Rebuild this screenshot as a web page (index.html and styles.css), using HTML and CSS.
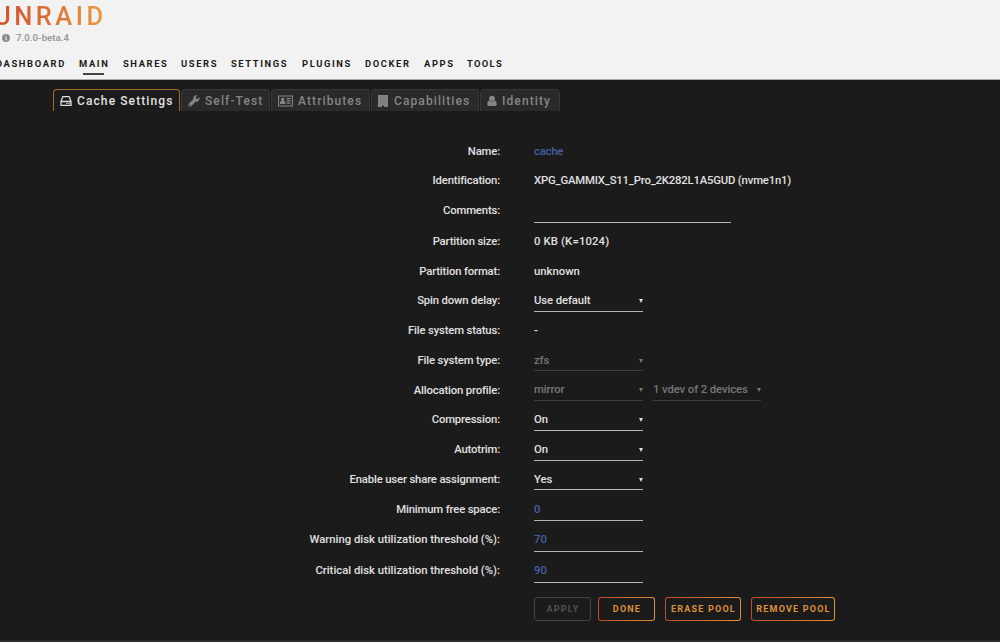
FILE: index.html
```
<!DOCTYPE html>
<html lang="en">

<head>
    <meta charset="utf-8">
    <title>Unraid - Cache Settings</title>
    <link rel="stylesheet" href="styles.css">
</head>

<body>
    <header class="header">
        <div class="logo">UNRAID</div>
        <div class="version">
            <svg class="info" viewBox="0 0 16 16"><circle cx="8" cy="8" r="8"/><path d="M7 3h2.5v2H7zM6 6.5h3.5V11h1v1.5H6V11h1V8H6z" fill="#d0d0d0"/></svg>
            <span>7.0.0-beta.4</span>
        </div>
    </header>

    <nav class="menu">
        <a class="dashboard">DASHBOARD</a>
        <a class="main active">MAIN</a>
        <a class="shares">SHARES</a>
        <a class="users">USERS</a>
        <a class="settings">SETTINGS</a>
        <a class="plugins">PLUGINS</a>
        <a class="docker">DOCKER</a>
        <a class="apps">APPS</a>
        <a class="tools">TOOLS</a>
    </nav>

    <div class="tabs">
        <div class="tab cache selected">
            <svg viewBox="0 0 12 12"><path d="M1 6.5 2.8 1.6h6.4L11 6.500v3.900H1zM1 6.500h10" fill="none" stroke="currentColor" stroke-width="1.3" stroke-linejoin="round"/><path d="M6.200 7.800h1.300v1.300H6.200zM8.400 7.800h1.300v1.300H8.400z"/></svg>
            <span>Cache Settings</span>
        </div>
        <div class="tab selftest">
            <svg viewBox="0 0 12 12"><path d="M11.3 2.2 9.5 4 8 3.6 7.7 2.3 9.6.5C7.300-.300 5 1.600 5.300 4.200L.7 8.800c-1.300 1.500.900 3.700 2.400 2.400l4.700-4.600c2.500.300 4.500-2 3.500-4.400zM2 9.300a.6.6 0 1 1 0 1.200.6.6 0 0 1 0-1.200z"/></svg>
            <span>Self-Test</span>
        </div>
        <div class="tab attributes">
            <svg class="wide" viewBox="0 0 15 12"><path d="M.6 1h13.800v10H.6z" fill="none" stroke="currentColor" stroke-width="1.1"/><circle cx="4.700" cy="4.200" r="1.700"/><path d="M2 9V7l1.500-1.400h2.400L7.400 7v2zM8.500 3h4v1.200h-4zM8.500 5.200h4v1.200h-4zM8.500 7.600h4v1.200h-4z"/></svg>
            <span>Attributes</span>
        </div>
        <div class="tab capabilities">
            <svg class="building" viewBox="0 0 10 12"><path fill-rule="evenodd" d="M0 0h10v12H6.200v-1.400H3.800V12H0zM2 2v.6h.6V2zm2.700 0v.6h.6V2zm2.700 0v.6H8V2zM2 4.500v.6h.6v-.6zm2.700 0v.6h.6v-.6zm2.700 0v.6H8v-.6zM2 7v.6h.6V7zm2.700 0v.6h.6V7zm2.700 0v.6H8V7z"/></svg>
            <span>Capabilities</span>
        </div>
        <div class="tab identity">
            <svg class="user" viewBox="0 0 10 12"><circle cx="5" cy="3.600" r="2.900"/><path d="M2.200 5.500C.8 5.900.300 7.500.300 9.200c0 1 .7 1.800 1.700 1.800h6c1 0 1.700-.8 1.700-1.800 0-1.700-.5-3.300-1.900-3.700C6.500 7.300 3.500 7.300 2.200 5.500z"/></svg>
            <span>Identity</span>
        </div>
    </div>

    <form class="form">
        <div class="row"><label>Name:</label><span class="value blue">cache</span></div>
        <div class="row"><label>Identification:</label><span class="value ident">XPG_GAMMIX_S11_Pro_2K282L1A5GUD (nvme1n1)</span></div>
        <div class="row input-row"><label>Comments:</label><span class="input long"></span></div>
        <div class="row"><label>Partition size:</label><span class="value size">0 KB (K=1024)</span></div>
        <div class="row"><label>Partition format:</label><span class="value">unknown</span></div>
        <div class="row"><label>Spin down delay:</label><span class="select">Use default</span></div>
        <div class="row"><label>File system status:</label><span class="value">-</span></div>
        <div class="row"><label>File system type:</label><span class="select disabled">zfs</span></div>
        <div class="row"><label>Allocation profile:</label><span class="select disabled">mirror</span><span class="select disabled vdev">1 vdev of 2 devices</span></div>
        <div class="row"><label>Compression:</label><span class="select">On</span></div>
        <div class="row"><label>Autotrim:</label><span class="select">On</span></div>
        <div class="row"><label>Enable user share assignment:</label><span class="select">Yes</span></div>
        <div class="row input-row"><label>Minimum free space:</label><span class="input">0</span></div>
        <div class="row input-row"><label class="threshold">Warning disk utilization threshold (%):</label><span class="input">70</span></div>
        <div class="row input-row"><label class="threshold">Critical disk utilization threshold (%):</label><span class="input">90</span></div>
    </form>

    <div class="buttons">
        <button type="button" class="apply" disabled>APPLY</button>
        <button type="button" class="done">DONE</button>
        <button type="button" class="erase">ERASE POOL</button>
        <button type="button" class="remove">REMOVE POOL</button>
    </div>

    <footer class="footer"></footer>
</body>

</html>
```
FILE: styles.css
```
* {
    box-sizing: border-box;
}

body {
    margin: 0;
    height: 642px;
    overflow: hidden;
    display: flex;
    flex-direction: column;
    background-color: #1c1b1b;
    color: #e0e0e0;
    font-family: Roboto, sans-serif;
    font-size: 11.3px;
    font-weight: 500;
    white-space: nowrap;
}

.header {
    height: 48px;
    background-color: #f2f2f2;
}

.logo {
    width: 114px;
    height: 30px;
    margin-left: -7px;
    padding-left: 1px;
    line-height: 33px;
    font-size: 25.5px;
    font-weight: 500;
    letter-spacing: 3.5px;
    background: linear-gradient(90deg, #d04a2c, #eb9b3b);
    -webkit-background-clip: text;
    background-clip: text;
    color: transparent;
}

.version {
    display: flex;
    align-items: center;
    gap: 6px;
    height: 15px;
    padding-left: 2px;
    color: #999;
    font-size: 9.7px;
    font-weight: 600;
}

.info {
    width: 8px;
    height: 8px;
    fill: #8c8c8c;
}

.menu {
    display: flex;
    height: 32px;
    padding-top: 8px;
    background-color: #f2f2f2;
    border-bottom: 1px solid #aaa;
    color: #1c1b1b;
    font-size: 9.4px;
    font-weight: 700;
    line-height: 15px;
    letter-spacing: 1.6px;
}

.menu a {
    flex-shrink: 0;
}

.menu .dashboard {
    width: 83px;
    margin-left: -4px;
}

.menu .main {
    width: 44px;
}

.menu .shares {
    width: 58px;
}

.menu .users {
    width: 50px;
}

.menu .settings {
    width: 71px;
}

.menu .plugins {
    width: 63px;
}

.menu .docker {
    width: 59px;
}

.menu .apps {
    width: 43px;
}

.menu .tools {
    letter-spacing: 1.3px;
}

.menu .active::after {
    content: "";
    display: block;
    width: 21px;
    height: 2px;
    margin: 2px 0 0 4px;
    background-color: #444;
}

.tabs {
    display: flex;
    gap: 1px;
    height: 31px;
    padding: 9px 0 0 53px;
}

.tab {
    display: flex;
    align-items: center;
    gap: 5px;
    height: 22px;
    padding-left: 6px;
    border: 1px solid #383838;
    border-bottom: none;
    border-radius: 4px 4px 0 0;
    background-color: #2b2a2a;
    color: #858585;
    font-size: 12px;
    letter-spacing: 1.1px;
}

.tab svg {
    width: 12px;
    height: 12px;
    fill: currentColor;
}

.tab .wide {
    width: 15px;
}

.tab .building,
.tab .user {
    width: 10px;
}

.cache {
    width: 127px;
}

.selftest {
    width: 89px;
}

.attributes {
    width: 99px;
}

.capabilities {
    width: 108px;
}

.capabilities span {
    padding-left: 1px;
}

.identity {
    width: 80px;
}

.tab.selected {
    background-color: #1c1b1b;
    border-color: #a8692b;
    color: #e0e0e0;
}

.form {
    padding-top: 30.5px;
}

.row {
    display: flex;
    height: 29.75px;
    line-height: 20px;
}

.row label {
    width: 500px;
    margin-right: 34px;
    text-align: right;
    letter-spacing: -0.15px;
}

.row .threshold {
    letter-spacing: 0;
}

.ident {
    letter-spacing: -0.17px;
}

.size {
    letter-spacing: 0.15px;
}

.input-row {
    height: 30.75px;
}

.blue,
.input {
    color: #465fa8;
}

.blue {
    letter-spacing: -0.2px;
}

.select,
.input {
    width: 109px;
    height: 20.5px;
    border-bottom: 1px solid #b4b4b4;
}

.input {
    height: 21.5px;
}

.long {
    width: 197px;
}

.select {
    display: flex;
    align-items: center;
    justify-content: space-between;
    letter-spacing: -0.1px;
}

/* dropdown arrow */
.select::after {
    content: "";
    border: 2.5px solid transparent;
    border-top: 4px solid currentColor;
    border-bottom: none;
}

.disabled {
    color: #777;
    border-bottom-color: #3d3d3d;
}

.vdev {
    margin-left: 9px;
    padding-left: 1px;
}

.buttons {
    display: flex;
    padding: 5.5px 0 0 534px;
}

.buttons button {
    height: 24px;
    margin: 0;
    padding: 0 0 0 1px;
    border: 1px solid transparent;
    border-radius: 3px;
    background: linear-gradient(#1c1b1b, #1c1b1b) padding-box, linear-gradient(90deg, #c04a2c, #dc9139) border-box;
    color: #dc9139;
    font-family: inherit;
    font-size: 9px;
    font-weight: 700;
    letter-spacing: 1.2px;
}

.buttons .apply {
    width: 57px;
    margin-right: 7px;
    background: #1c1b1b;
    border-color: #444;
    color: #505050;
}

.buttons .done {
    width: 57px;
    margin-right: 10px;
}

.buttons .erase {
    width: 76px;
    margin-right: 10px;
}

.buttons .remove {
    width: 84px;
}

.footer {
    height: 2px;
    margin-top: auto;
    background-color: #2b2a2a;
}
```
